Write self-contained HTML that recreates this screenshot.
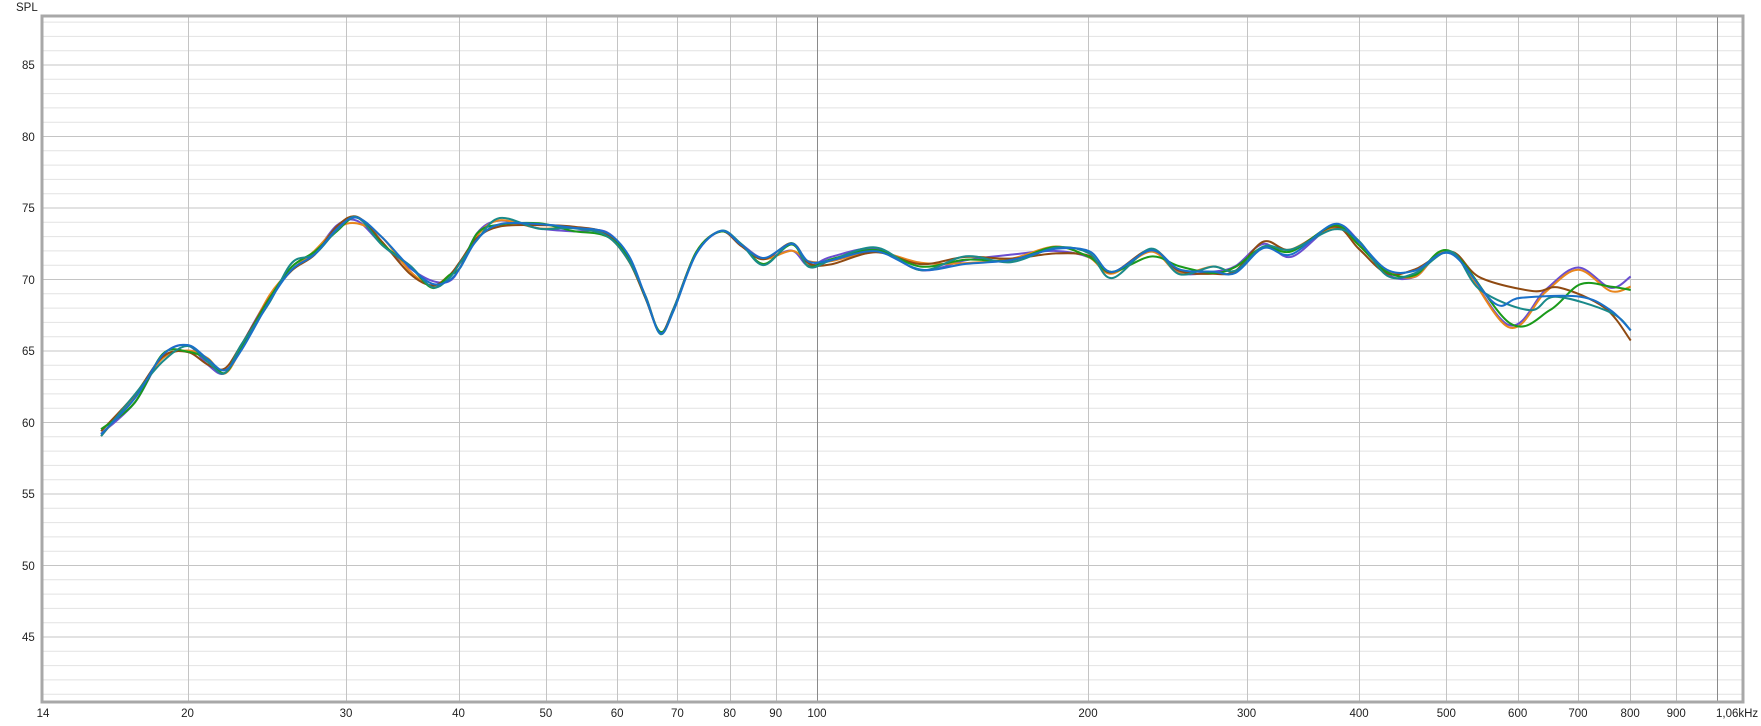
<!DOCTYPE html>
<html><head><meta charset="utf-8"><style>
html,body{margin:0;padding:0;background:#fff;width:1761px;height:726px;overflow:hidden;font-family:"Liberation Sans",Arial,sans-serif;}
.t{position:absolute;font-size:11.5px;color:#222;}
</style></head><body>
<div class="t" style="left:16px;top:2px;">SPL</div>
<svg id="g" width="1761" height="726" style="position:absolute;left:0;top:0"></svg>
<div id="lbl"></div>
<svg id="c" width="1761" height="726" viewBox="0 0 1568 646" preserveAspectRatio="none" style="position:absolute;left:0;top:0"></svg>
<script>
var L=43,R=1742,T=17,B=701;
function X(f){return 187.5+900.5*Math.log10(f/20);}
function Y(d){return 65+(85-d)*14.3;}
var s='<rect x="'+L+'" y="'+T+'" width="'+(R-L)+'" height="'+(B-T)+'" fill="#fff"/>';
for(var d=41;d<=88;d++){var y=Y(d);s+='<line x1="'+L+'" x2="'+R+'" y1="'+y+'" y2="'+y+'" stroke="'+(d%5==0?'#c4c4c4':'#e2e2e2')+'" stroke-width="1"/>';}
var fs=[20,30,40,50,60,70,80,90,100,200,300,400,500,600,700,800,900,1000];
fs.forEach(function(f){var x=Math.round(X(f))+0.5;s+='<line x1="'+x+'" x2="'+x+'" y1="'+T+'" y2="'+B+'" stroke="'+((f==100||f==1000)?'#8a8a8a':'#c4c4c4')+'"/>';});
s+='<rect x="'+(L-1)+'" y="'+(T-1)+'" width="'+(R-L+2)+'" height="'+(B-T+2)+'" fill="none" stroke="#a8a8a8" stroke-width="3"/>';
document.getElementById('g').innerHTML=s;
var h='';
for(var d=45;d<=85;d+=5)h+='<div class="t" style="left:22px;top:'+(Y(d)-5)+'px">'+d+'</div>';
var lab=[[14,'14'],[20,'20'],[30,'30'],[40,'40'],[50,'50'],[60,'60'],[70,'70'],[80,'80'],[90,'90'],[100,'100'],[200,'200'],[300,'300'],[400,'400'],[500,'500'],[600,'600'],[700,'700'],[800,'800'],[900,'900']];
lab.forEach(function(a){var x=a[0]==14?43:X(a[0]);h+='<div class="t" style="left:'+(x-20)+'px;width:40px;text-align:center;top:708px">'+a[1]+'</div>';});
h+='<div class="t" style="left:1716px;top:708px">1,06kHz</div>';
document.getElementById('lbl').innerHTML=h;
var base=[[90,385],[120,355],[145,318],[167,310],[185,322],[200,330],[215,310],[240,265],[260,237],[280,225],[300,204],[318,196],[340,214],[365,240],[385,253],[400,248],[410,235],[425,210],[445,198],[480,200],[510,205],[540,210],[560,230],[575,265],[588,296],[600,275],[620,225],[642,205],[660,218],[680,232],[705,220],[720,235],[740,232],[780,222],[820,237],[860,232],[900,230],[940,222],[970,226],[990,245],[1025,225],[1050,240],[1080,240],[1100,240],[1125,218],[1150,225],[1188,200],[1210,218],[1235,243],[1260,243],[1292,226]];
var tails={
p:[[1343,289],[1376,258],[1405,238],[1434,256],[1452,246]],
o:[[1343,291],[1376,260],[1405,240],[1434,259],[1452,255]],
gr:[[1345,288],[1380,276],[1407,253],[1434,255],[1452,258]],
br:[[1318,247],[1365,259],[1389,256],[1429,274],[1452,303]],
te:[[1318,258],[1362,276],[1385,264],[1434,278],[1452,294]],
bl:[[1331,270],[1354,265],[1407,264],[1434,276],[1452,294]]};
var cv=[['p','#6a4fd0',0.3,3.5,1.7],['o','#e8861e',1.9,3.2,2.3],['br','#8f4a12',3.5,3.6,1.3],['gr','#1a9a1a',5.0,3.2,2.9],['te','#1a8a8a',0.9,4,3.7],['bl','#1a70c8',2.6,3,0.7]];
function cr(p){var d='M'+p[0][0]+','+p[0][1];for(var i=0;i<p.length-1;i++){var p0=p[i-1]||p[i],p1=p[i],p2=p[i+1],p3=p[i+2]||p2;d+=' C'+(p1[0]+(p2[0]-p0[0])/6).toFixed(1)+','+(p1[1]+(p2[1]-p0[1])/6).toFixed(1)+' '+(p2[0]-(p3[0]-p1[0])/6).toFixed(1)+','+(p2[1]-(p3[1]-p1[1])/6).toFixed(1)+' '+p2[0]+','+p2[1];}return d;}
var out='';
cv.forEach(function(c){var pts=base.map(function(q,i){var off=c[3]*Math.sin(i*c[4]+c[2]);if(q[0]>560&&q[0]<680)off*=0.3;return [q[0],+(q[1]+off).toFixed(1)];});pts=pts.concat(tails[c[0]]);out+='<path d="'+cr(pts)+'" fill="none" stroke="'+c[1]+'" stroke-width="1.8" stroke-linejoin="round"/>';});
document.getElementById('c').innerHTML=out;
</script>
</body></html>
